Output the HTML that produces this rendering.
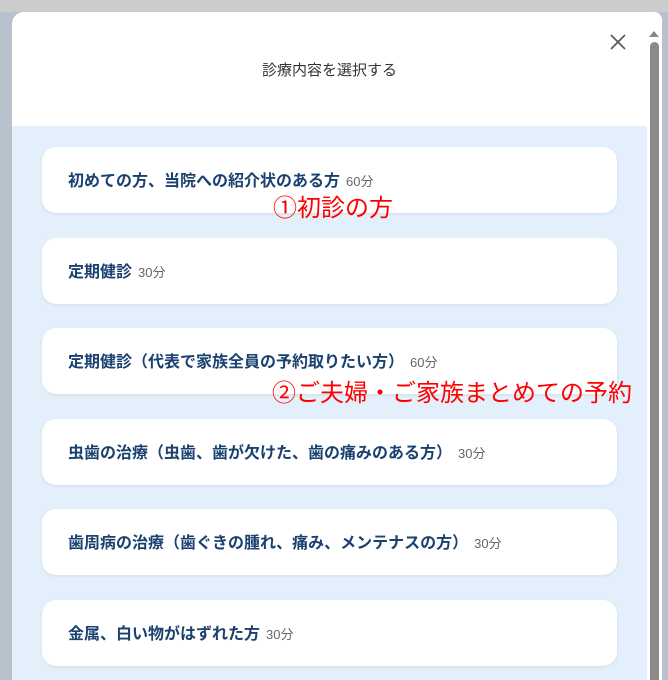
<!DOCTYPE html>
<html><head><meta charset="utf-8"><style>
*{margin:0;padding:0;box-sizing:border-box}
html,body{width:668px;height:680px;overflow:hidden}
body{background:#b9c2cc;font-family:"Liberation Sans","Noto Sans CJK JP",sans-serif;position:relative}
.top{position:absolute;left:0;top:0;width:668px;height:12px;background:#cccccc}
.modal{position:absolute;left:12px;top:12px;width:650px;height:668px;background:#fff;border-radius:12px 8px 0 0;overflow:hidden}
.title{position:absolute;left:0;width:635px;top:47px;text-align:center;font-size:15px;color:#333}
.close{position:absolute;left:598px;top:22px}
.area{position:absolute;left:0;top:114px;width:635px;height:554px;background:#e3f0fb}
.card{position:absolute;left:30px;width:575px;height:66px;background:#fff;border-radius:14px;box-shadow:0 1px 3px rgba(0,0,0,.08);padding-left:26px;padding-top:2px;line-height:66px;font-size:16px;font-weight:bold;color:#1b4170;white-space:nowrap}
.card span{font-weight:normal;font-size:13px;color:#666;margin-left:6px}
.sb{position:absolute;left:638px;top:30px;width:9px;height:638px;background:#8a8a8a;border-radius:5px 5px 0 0}
.arr{position:absolute;left:637px;top:19px;width:0;height:0;border-left:5px solid transparent;border-right:5px solid transparent;border-bottom:6px solid #888}
.red{position:absolute;color:#f00;font-size:24px;white-space:nowrap}
</style></head><body>
<div class="top"></div>
<div class="modal">
<div class="title">診療内容を選択する</div>
<svg class="close" width="16" height="16" viewBox="0 0 16 16"><path d="M1 1L15 15M15 1L1 15" stroke="#555" stroke-width="1.6"/></svg>
<div class="area">
<div class="card" style="top:21px">初めての方、当院への紹介状のある方<span>60分</span></div>
<div class="card" style="top:112px">定期健診<span>30分</span></div>
<div class="card" style="top:202px">定期健診（代表で家族全員の予約取りたい方）<span>60分</span></div>
<div class="card" style="top:293px">虫歯の治療（虫歯、歯が欠けた、歯の痛みのある方）<span>30分</span></div>
<div class="card" style="top:383px">歯周病の治療（歯ぐきの腫れ、痛み、メンテナスの方）<span>30分</span></div>
<div class="card" style="top:474px">金属、白い物がはずれた方<span>30分</span></div>
</div>
<div class="arr"></div>
<div class="sb"></div>
</div>
<div class="red" style="left:273px;top:188px">①初診の方</div>
<div class="red" style="left:272px;top:373px">②ご夫婦・ご家族まとめての予約</div>
</body></html>
